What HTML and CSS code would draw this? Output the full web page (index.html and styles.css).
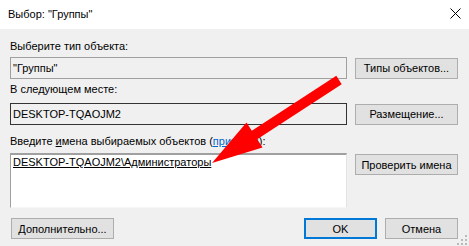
FILE: index.html
```html
<!DOCTYPE html>
<html lang="ru">
<head>
    <meta charset="UTF-8">
    <title>Выбор: "Группы"</title>
    <link rel="stylesheet" href="styles.css">
</head>
<body>
    <div class="titlebar">
        <span class="title">Выбор: "Группы"</span>
        <svg class="close" width="11" height="11" viewBox="0 0 11 11">
            <path d="M0.5 0.5 L10.5 10.5 M10.5 0.5 L0.5 10.5" stroke="#000" stroke-width="1"/>
        </svg>
    </div>

    <div class="dialog">
        <div class="label first">Выберите тип объекта:</div>
        <div class="row">
            <div class="field">"Группы"</div>
            <button class="btn">Типы объектов...</button>
        </div>

        <div class="label">В следующем месте:</div>
        <div class="row">
            <div class="field dark">DESKTOP-TQAOJM2</div>
            <button class="btn">Размещение...</button>
        </div>

        <div class="label third">Введите <u>и</u>мена выбираемых объектов (<a href="#">примеры</a>):</div>
        <div class="row top">
            <div class="names"><u>DESKTOP-TQAOJM2\Администраторы</u></div>
            <button class="btn">Проверить имена</button>
        </div>

        <div class="footer">
            <button class="btn wide">Дополнительно...</button>
            <div class="spacer"></div>
            <button class="btn small ok">OK</button>
            <button class="btn small">Отмена</button>
        </div>
    </div>

    <!-- red pointer drawn over the dialog -->
    <svg class="arrow" width="469" height="246" viewBox="0 0 469 246">
        <polygon fill="#ff0000" points="212,163 246.5,122.5 251.8,130.8 336.3,75.8 341.7,84.2 257.2,139.2 262.5,147.5"/>
    </svg>

    <svg class="grip" width="10" height="10" viewBox="0 0 10 10">
        <rect x="8" y="0" width="2" height="2" fill="#b9b9b9"/>
        <rect x="8" y="4" width="2" height="2" fill="#b9b9b9"/>
        <rect x="4" y="4" width="2" height="2" fill="#b9b9b9"/>
        <rect x="8" y="8" width="2" height="2" fill="#b9b9b9"/>
        <rect x="4" y="8" width="2" height="2" fill="#b9b9b9"/>
        <rect x="0" y="8" width="2" height="2" fill="#b9b9b9"/>
    </svg>
</body>
</html>
```

FILE: styles.css
```css
body {
    margin: 0;
    width: 469px;
    height: 246px;
    overflow: hidden;
    position: relative;
    background-color: #f0f0f0;
    font-family: 'Liberation Sans', Arial, sans-serif;
    font-size: 11px;
    color: #000;
}
.titlebar {
    height: 29px;
    background-color: #fff;
    display: flex;
    align-items: center;
    justify-content: space-between;
    padding: 0 8px 0 8px;
}
.title {
    margin-top: -1px;
}
.close {
    margin-top: -2px;
}
.dialog {
    padding: 0 11px 0 10px;
}
.label {
    height: 15px;
    line-height: 15px;
    white-space: nowrap;
    margin-top: 3px;
    margin-bottom: 6px;
}
.label.first {
    margin-top: 10px;
    margin-bottom: 3px;
}
.label.third {
    margin-top: 9px;
    margin-bottom: 4px;
}
.label a {
    color: #0066cc;
}
.row {
    display: grid;
    grid-template-columns: 1fr 103px;
    column-gap: 8px;
    align-items: center;
}
.row.top {
    align-items: start;
}
.row.top .btn {
    margin-top: 1px;
}
.field {
    height: 22px;
    box-sizing: border-box;
    border: 1px solid #a0a0a0;
    padding: 0 2px;
    line-height: 20px;
}
.field.dark {
    border-color: #333;
}
.names {
    height: 55px;
    box-sizing: border-box;
    background-color: #fff;
    border-style: solid;
    border-width: 2px 1px 1px 1px;
    border-color: #a0a0a0 #e3e3e3 #f7f7f7 #a0a0a0;
    padding: 0 2px;
    line-height: 15px;
}
.btn {
    height: 21px;
    box-sizing: border-box;
    background-color: #e1e1e1;
    border: 1px solid #adadad;
    border-radius: 0;
    padding: 0;
    font-family: inherit;
    font-size: 11px;
    color: #000;
}
.footer {
    display: flex;
    gap: 8px;
    margin-top: 10px;
}
.spacer {
    flex: 1;
}
.btn.wide {
    width: 103px;
    margin-left: 1px;
}
.btn.small {
    width: 73px;
}
.btn.ok {
    border: 2px solid #0078d7;
}
.arrow {
    position: absolute;
    left: 0;
    top: 0;
}
.grip {
    position: absolute;
    right: 2px;
    bottom: 1px;
}
```
